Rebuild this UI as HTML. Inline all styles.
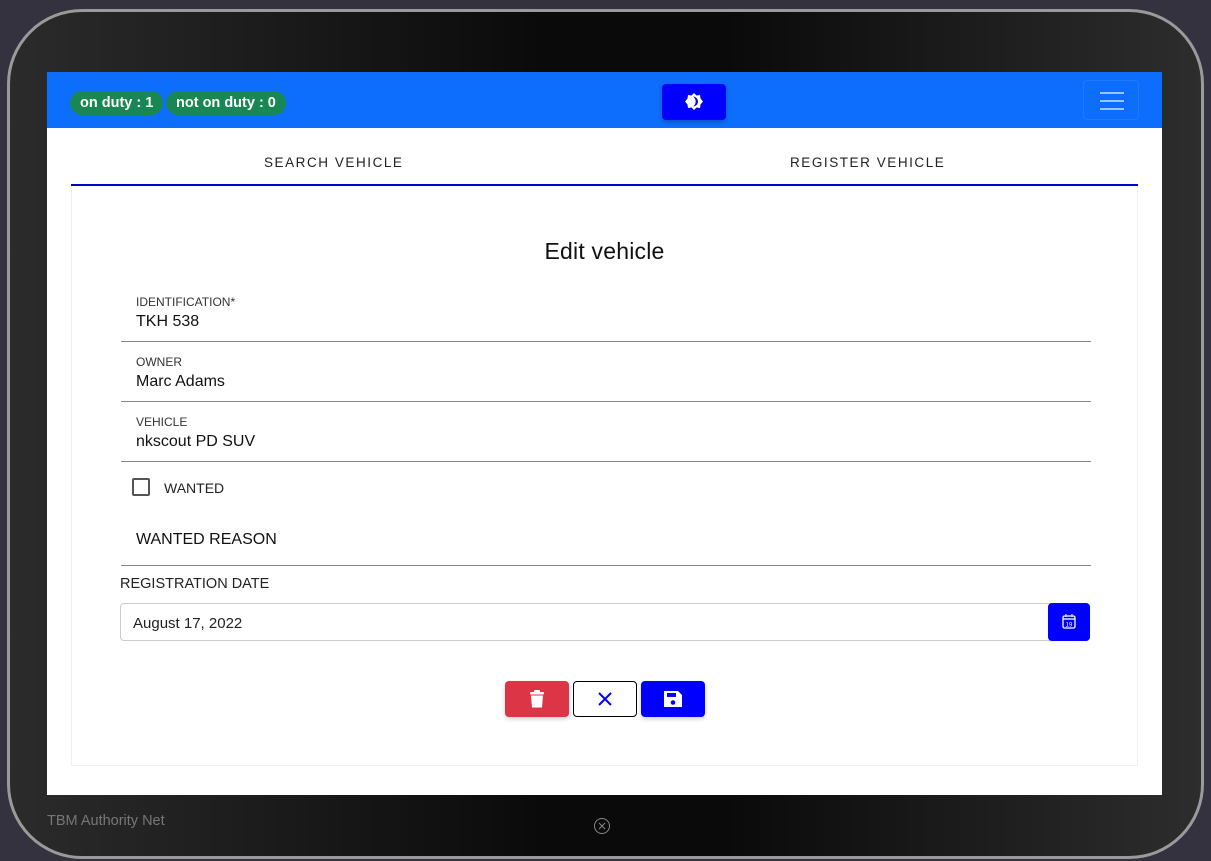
<!DOCTYPE html>
<html><head><style>
*{box-sizing:border-box;margin:0;padding:0}
body{width:1211px;height:861px;background:#34323f;font-family:"Liberation Sans",sans-serif;position:relative;overflow:hidden}
.frame{position:absolute;left:7px;top:9px;width:1197px;height:850px;border-radius:75px;border:3px solid #9a9a9a;background:linear-gradient(90deg,#2b2b2b 0%,#0a0a0a 45%,#0a0a0a 60%,#2d2d2d 100%)}
.screen{position:absolute;left:47px;top:72px;width:1115px;height:723px;background:#fff}
.nav{height:56px;background:#0d6efd;position:relative}
.badge{position:absolute;top:19px;height:24px;border-radius:12px;background:#198754;color:#fff;font-weight:bold;font-size:14.5px;line-height:24px;padding:0 10px}
.theme{position:absolute;left:615px;top:12px;width:64px;height:36px;background:#0000ff;border-radius:4px;box-shadow:0 2px 4px rgba(0,0,0,.25)}
.burger{position:absolute;left:1036px;top:8px;width:56px;height:40px;border:1px solid rgba(255,255,255,.08);border-radius:4px}
.burger i{position:absolute;left:16px;width:24px;height:2px;background:#9cc5ff}
.tabs{position:absolute;left:24px;top:56px;width:1067px;height:58px;border-bottom:2px solid #0000cc}
.tab{position:absolute;top:27px;font-size:13.5px;letter-spacing:1.55px;color:#222}
.card{position:absolute;left:24px;top:114px;width:1067px;height:580px;border:1px solid #f0f0f0;border-top:none}
h2{position:absolute;left:0;width:100%;text-align:center;top:52px;font-size:23px;font-weight:normal;color:#111;letter-spacing:.2px}
.field{position:absolute;left:49px;width:970px;height:60px;border-bottom:1px solid #888}
.lab{position:absolute;left:15px;top:13px;font-size:12px;color:#333}
.val{position:absolute;left:15px;top:31px;font-size:16px;color:#111}
.btn{position:absolute;top:495px;width:64px;height:36px;border-radius:4px}
</style></head><body>
<div class="frame"></div>
<div class="screen">
 <div class="nav">
  <div class="badge" style="left:23px">on duty : 1</div>
  <div class="badge" style="left:119px">not on duty : 0</div>
  <div class="theme"><svg width="64" height="36" viewBox="0 0 64 36"><polygon fill="#fff" points="32,9 34.5,11.5 38,11 38.5,14.5 41,17.5 38.5,20.5 38,24 34.5,23.5 32,26 29.5,23.5 26,24 25.5,20.5 23,17.5 25.5,14.5 26,11 29.5,11.5"/><path d="M31 12.5a5 5 0 0 1 0 10a6 6 0 0 0 0-10z" fill="#0000ff"/></svg></div>
  <div class="burger"><i style="top:11px"></i><i style="top:19px"></i><i style="top:27px"></i></div>
 </div>
 <div class="tabs">
  <div class="tab" style="left:193px">SEARCH VEHICLE</div>
  <div class="tab" style="left:719px">REGISTER VEHICLE</div>
 </div>
 <div class="card">
  <h2>Edit vehicle</h2>
  <div class="field" style="top:96px"><div class="lab">IDENTIFICATION*</div><div class="val">TKH 538</div></div>
  <div class="field" style="top:156px"><div class="lab">OWNER</div><div class="val">Marc Adams</div></div>
  <div class="field" style="top:216px"><div class="lab">VEHICLE</div><div class="val">nkscout PD SUV</div></div>
  <div style="position:absolute;left:60px;top:292px;width:18px;height:18px;border:2px solid #555;border-radius:2px"></div>
  <div style="position:absolute;left:92px;top:294px;font-size:14px;color:#222">WANTED</div>
  <div class="field" style="top:320px;height:60px"><div class="val" style="top:25px">WANTED REASON</div></div>
  <div style="position:absolute;left:48px;top:390px;font-size:14.5px;color:#222">REGISTRATION DATE</div>
  <div style="position:absolute;left:48px;top:417px;width:970px;height:38px;border:1px solid #ccc;border-radius:4px"><div style="position:absolute;left:12px;top:11px;font-size:15px;color:#222">August 17, 2022</div></div>
  <div style="position:absolute;left:976px;top:417px;width:42px;height:38px;background:#0000ff;border-radius:4px"><svg width="42" height="38"><rect x="15" y="13" width="12" height="12" rx="1.5" fill="none" stroke="#fff" stroke-width="1.3"/><line x1="15" y1="16" x2="27" y2="16" stroke="#fff" stroke-width="1.3"/><line x1="18" y1="11" x2="18" y2="14" stroke="#fff"/><line x1="24" y1="11" x2="24" y2="14" stroke="#fff"/><text x="21" y="23.5" font-size="6" fill="#fff" text-anchor="middle" font-family="Liberation Sans">19</text></svg></div>
  <div class="btn" style="left:433px;background:#dc3545;box-shadow:0 2px 4px rgba(0,0,0,.2)"><svg width="64" height="36"><rect x="25" y="11" width="14" height="2.5" rx="1" fill="#fff"/><rect x="29" y="9" width="6" height="3" rx="1" fill="#fff"/><path d="M26 14.5h12l-1 12h-10z" fill="#fff"/></svg></div>
  <div class="btn" style="left:501px;border:1px solid #000;width:64px"><svg width="62" height="34"><path d="M25 11l12 12M37 11l-12 12" stroke="#0000ff" stroke-width="2"/></svg></div>
  <div class="btn" style="left:569px;background:#0000ff;box-shadow:0 2px 4px rgba(0,0,0,.2)"><svg width="64" height="36"><path d="M23 10h14l4 4v12h-18z" fill="#fff"/><rect x="26" y="12" width="9" height="4" fill="#0000ff"/><circle cx="32" cy="21.5" r="2.3" fill="#0000ff"/></svg></div>
 </div>
</div>
<div style="position:absolute;left:47px;top:813px;font-size:14.5px;color:#777">TBM Authority Net</div>
<svg style="position:absolute;left:593px;top:817px" width="18" height="18"><circle cx="9" cy="9" r="7.5" fill="none" stroke="#888"/><path d="M6 6l6 6M12 6l-6 6" stroke="#888"/></svg>
</body></html>
